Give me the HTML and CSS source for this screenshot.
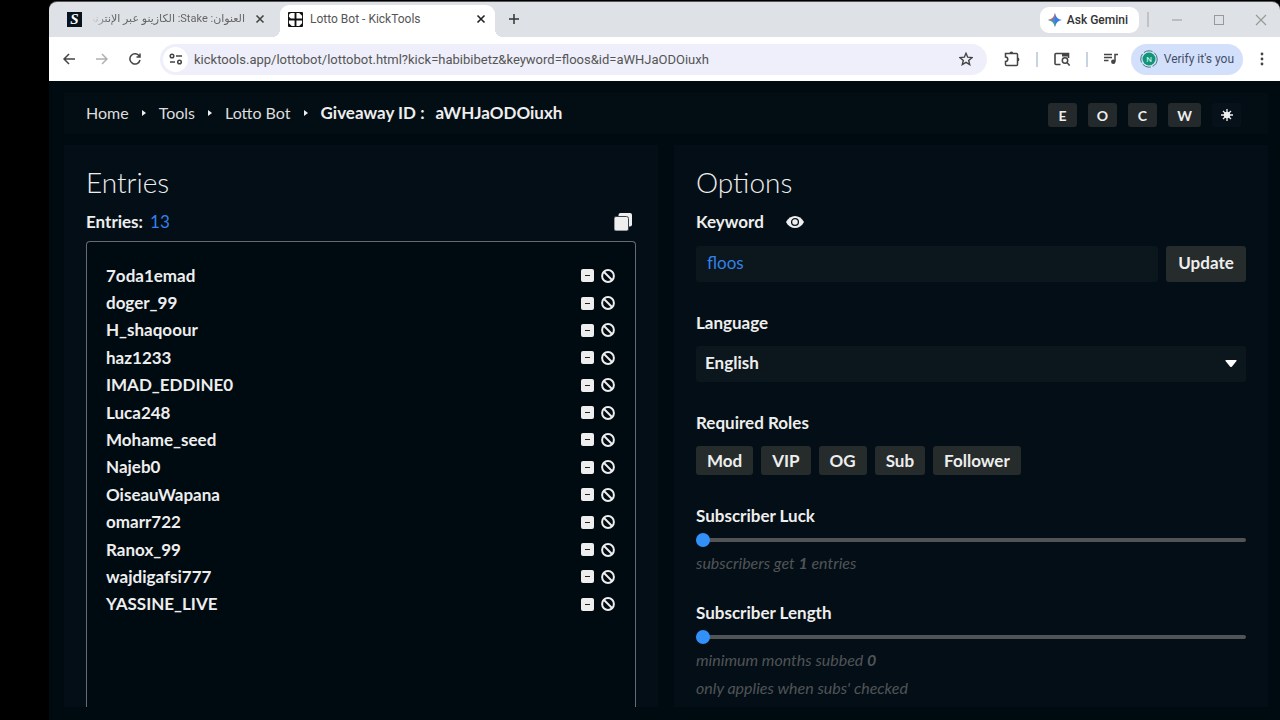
FILE: index.html
```html
<!DOCTYPE html>
<html lang="en">
<head>
    <meta charset="UTF-8">
    <meta name="viewport" content="width=device-width, initial-scale=1.0">
    <title>Lotto Bot - KickTools</title>
    <link rel="stylesheet" href="styles.css">
</head>
<body>
    <div class="window">
        <div class="tabs">
            <div class="tab">
                <span class="favicon stake">S</span>
                <span class="tab-title tab-title-rtl" dir="rtl" lang="ar">العنوان: Stake: الكازينو عبر الإنترنت</span>
                <button class="icon-btn" aria-label="Close tab"><svg width="10" height="10" viewBox="0 0 10 10"><path d="M1.500 1.500l7 7M8.500 1.500l-7 7" stroke="#444" stroke-width="1.600"/></svg></button>
            </div>
            <div class="tab active">
                <svg class="favicon" viewBox="0 0 16 16"><rect width="16" height="16" rx="1" fill="#111"/><g fill="#fff"><path d="M1 4a3 3 0 0 1 3-3h3v6H3L1 5zM9 1h3l3 3v3H9zM1 9h6v6H4l-3-3zM9 9h6v3l-3 3H9z"/></g></svg>
                <span class="tab-title">Lotto Bot - KickTools</span>
                <button class="icon-btn" aria-label="Close tab"><svg width="10" height="10" viewBox="0 0 10 10"><path d="M1.500 1.500l7 7M8.500 1.500l-7 7" stroke="#222" stroke-width="1.600"/></svg></button>
            </div>
            <button class="icon-btn new-tab" aria-label="New tab"><svg width="12" height="12" viewBox="0 0 12 12"><path d="M6 1v10M1 6h10" stroke="#333" stroke-width="1.500"/></svg></button>
            <div class="window-controls">
                <button class="gemini"><svg width="14" height="14" viewBox="0 0 14 14"><path d="M7 0Q8 6 14 7 8 8 7 14 6 8 0 7 6 6 7 0z" fill="#367de8"/><path d="M7 0Q6 6 0 7l7 0z" fill="#e55b4f"/><path d="M0 7q6 1 7 7V7z" fill="#4eac62"/><path d="M4 6l3-2v6L4 8z" fill="#5285cf"/></svg>Ask Gemini</button>
                <span class="divider"></span>
                <button class="icon-btn" aria-label="Minimize"><svg width="12" height="12" viewBox="0 0 12 12"><path d="M1 6h10" stroke="#999"/></svg></button>
                <button class="icon-btn" aria-label="Maximize"><svg width="12" height="12" viewBox="0 0 12 12"><rect x="1.500" y="1.500" width="9" height="9" fill="none" stroke="#999"/></svg></button>
                <button class="icon-btn" aria-label="Close"><svg width="12" height="12" viewBox="0 0 12 12"><path d="M1 1l10 10M11 1L1 11" stroke="#999" stroke-width="1.200"/></svg></button>
            </div>
        </div>
        <div class="toolbar">
            <div class="nav-buttons">
                <button class="icon-btn" aria-label="Back"><svg width="12" height="12" viewBox="0 0 12 12"><path d="M12 6H1M6 1L1 6l5 5" fill="none" stroke="#444" stroke-width="1.500"/></svg></button>
                <button class="icon-btn" aria-label="Forward"><svg width="12" height="12" viewBox="0 0 12 12"><path d="M0 6h11M6 1l5 5-5 5" fill="none" stroke="#b0b0b0" stroke-width="1.500"/></svg></button>
                <button class="icon-btn" aria-label="Reload"><svg width="12" height="12" viewBox="0 0 12 12"><path d="M10.300 3.200A5.100 5.100 0 1 0 11 7M11 .5V4H7.500" fill="none" stroke="#444" stroke-width="1.500"/></svg></button>
            </div>
            <div class="address">
                <span class="site-info"><svg width="14" height="12" viewBox="0 0 14 12" fill="none" stroke="#444" stroke-width="1.500"><circle cx="3" cy="3" r="1.800"/><path d="M7 3h6M1 9h5"/><circle cx="10.500" cy="9" r="1.800"/></svg></span>
                <input class="url" type="text" aria-label="Address" value="kicktools.app/lottobot/lottobot.html?kick=habibibetz&amp;keyword=floos&amp;id=aWHJaODOiuxh">
                <button class="icon-btn" aria-label="Bookmark"><svg width="14" height="14" viewBox="0 0 14 14"><path d="M7 1.300l1.700 3.900 4.300.4-3.300 2.800 1 4.200L7 10.400l-3.700 2.200 1-4.200L1 5.600l4.300-.4z" fill="none" stroke="#444" stroke-width="1.400"/></svg></button>
            </div>
            <div class="extensions">
                <button class="icon-btn" aria-label="Extensions"><svg width="16" height="16" viewBox="0 0 16 16"><path d="M1.500 2.500h11q1 0 1 1v10q0 1-1 1h-10q-1 0-1-1V10.500q2.300 0 2.300-2.200T1.500 6z" fill="none" stroke="#444" stroke-width="1.500"/><path d="M5.500 2.500a1.900 1.900 0 0 1 3.800 0zM13.500 6.500a1.900 1.900 0 0 1 0 3.800z" fill="#444"/></svg></button>
                <span class="divider"></span>
                <button class="icon-btn" aria-label="Search tabs"><svg width="16" height="14" viewBox="0 0 16 14"><path d="M6.500 12.500H2q-1 0-1-1v-9q0-1 1-1h12.500V6" fill="none" stroke="#444" stroke-width="1.600"/><path d="M8 1h7v3.500H8z" fill="#444"/><circle cx="11" cy="8.500" r="2.700" fill="none" stroke="#444" stroke-width="1.500"/><path d="M13 10.500l2.700 3" stroke="#444" stroke-width="1.600"/></svg></button>
                <span class="divider"></span>
                <button class="icon-btn" aria-label="Media"><svg width="14" height="12" viewBox="0 0 14 12"><path d="M0 1.500h8M0 4.500h8M0 7.500h4.500M14 1.500h-3v7" fill="none" stroke="#444" stroke-width="1.500"/><circle cx="9.300" cy="8.800" r="2.200" fill="#444"/></svg></button>
                <button class="profile"><svg width="18" height="18" viewBox="0 0 18 18"><circle cx="9" cy="9" r="8.200" fill="none" stroke="#45776f" stroke-dasharray="9 2"/><circle cx="9" cy="9" r="6.500" fill="#119579"/><text x="9" y="12" text-anchor="middle" font-size="8" fill="#d7fff2">N</text></svg>Verify it's you</button>
                <button class="icon-btn" aria-label="Menu"><svg width="4" height="14" viewBox="0 0 4 14" fill="#444"><circle cx="2" cy="2" r="1.400"/><circle cx="2" cy="7" r="1.400"/><circle cx="2" cy="12" r="1.400"/></svg></button>
            </div>
        </div>

        <div class="page">
            <header class="header">
                <nav class="breadcrumb">
                    <a href="#">Home</a>
                    <span class="arrow"></span>
                    <a href="#">Tools</a>
                    <span class="arrow"></span>
                    <a href="#">Lotto Bot</a>
                    <span class="arrow"></span>
                    <strong>Giveaway ID :</strong>
                    <strong class="giveaway-id">aWHJaODOiuxh</strong>
                </nav>
                <div class="shortcuts">
                    <button class="key">E</button>
                    <button class="key">O</button>
                    <button class="key">C</button>
                    <button class="key key-wide">W</button>
                    <button class="key key-theme" aria-label="Theme"><svg width="12" height="12" viewBox="0 0 12 12"><circle cx="6" cy="6" r="3.200" fill="#eee"/><path d="M6 0v12M0 6h12M2 2l8 8M10 2l-8 8" stroke="#eee" stroke-width="1.300"/></svg></button>
                </div>
            </header>
            <main class="columns">
                <section class="panel">
                    <h1>Entries</h1>
                    <div class="label-row entries-head">
                        <h2>Entries: <span class="count">13</span></h2>
                        <button class="icon-btn" aria-label="Copy entries"><svg width="18" height="18" viewBox="0 0 18 18"><rect x="4.500" y="0" width="13.500" height="13.500" rx="2" fill="#eee"/><rect x="0" y="3.500" width="14.500" height="14.500" rx="2" fill="#eee" stroke="#39424a"/></svg></button>
                    </div>
                    <div class="entries-box">
                        <ul class="entries" id="entries"></ul>
                    </div>
                </section>
                <section class="panel">
                    <h1>Options</h1>
                    <div class="label-row">
                        <label for="keyword">Keyword</label>
                        <button class="icon-btn eye" aria-label="Show keyword"><svg width="18" height="12" viewBox="0 0 18 12"><path d="M0 6C4-2 14-2 18 6 14 14 4 14 0 6z" fill="#eee"/><circle cx="9" cy="6" r="3.400" fill="none" stroke="#07111a" stroke-width="1.300"/></svg></button>
                    </div>
                    <div class="keyword-row">
                        <input class="field keyword" id="keyword" type="text" value="floos">
                        <button class="btn update">Update</button>
                    </div>
                    <label class="label-row" for="language">Language</label>
                    <div class="select-wrap">
                        <select class="field language" id="language"><option>English</option></select>
                        <svg class="caret" width="12" height="7" viewBox="0 0 12 7"><path d="M1 0h10q1 0 .5 1L7 6.500q-1 1-2 0L.5 1Q0 0 1 0z" fill="#fff"/></svg>
                    </div>
                    <h2 class="label-row">Required Roles</h2>
                    <div class="roles">
                        <button class="btn">Mod</button>
                        <button class="btn">VIP</button>
                        <button class="btn">OG</button>
                        <button class="btn">Sub</button>
                        <button class="btn">Follower</button>
                    </div>
                    <div class="slider-group">
                        <label for="luck">Subscriber Luck</label>
                        <input class="slider" id="luck" type="range" min="1" max="10" value="1">
                        <p class="hint">subscribers get <b>1</b> entries</p>
                    </div>
                    <div class="slider-group">
                        <label for="length">Subscriber Length</label>
                        <input class="slider" id="length" type="range" min="0" max="24" value="0">
                        <p class="hint">minimum months subbed <b>0</b></p>
                        <p class="hint">only applies when subs' checked</p>
                    </div>
                </section>
            </main>
        </div>
    </div>
    <script src="script.js"></script>
</body>
</html>
```
FILE: styles.css
```css
* {
    box-sizing: border-box;
}
body {
    margin: 0;
    padding: 2px 0 0 49px;
    height: 100vh;
    background-color: #000;
    font-family: Lato, sans-serif;
    overflow: hidden;
}
button, input, select {
    font-family: inherit;
    border: 0;
    margin: 0;
}
button {
    padding: 0;
    cursor: pointer;
}
svg {
    display: block;
    flex-shrink: 0;
}
.window {
    height: 100%;
    display: flex;
    flex-direction: column;
    border-radius: 8px 8px 0 0;
    background-color: #000a11;
}
.icon-btn {
    background: none;
    display: flex;
    align-items: center;
    justify-content: center;
}

/* Browser bar */
.tabs {
    display: flex;
    align-items: flex-end;
    height: 35px;
    flex-shrink: 0;
    border-radius: 8px 8px 0 0;
    background-color: #dee1e5;
    box-shadow: 0 -1px 0 #55565a;
    font-family: Roboto, sans-serif;
}
.tab {
    display: flex;
    align-items: center;
    gap: 7px;
    width: 231px;
    height: 32px;
    padding: 0 15px 4px 18px;
    color: #666;
    font-size: 12px;
}
.tab.active {
    position: relative;
    width: 215px;
    padding: 0 9px 4px 8px;
    background-color: #fff;
    border-radius: 9px 9px 0 0;
    color: #555;
}
/* Curved feet of the active tab */
.tab.active::before,
.tab.active::after {
    content: "";
    position: absolute;
    bottom: 0;
    width: 8px;
    height: 8px;
}
.tab.active::before {
    left: -8px;
    background: radial-gradient(circle at 0 0, transparent 8px, #fff 8px);
}
.tab.active::after {
    right: -8px;
    background: radial-gradient(circle at 100% 0, transparent 8px, #fff 8px);
}
.favicon {
    width: 15px;
    height: 15px;
}
.stake {
    background-color: #07141f;
    color: #fff;
    font-family: "Liberation Serif", serif;
    font-size: 15px;
    font-style: italic;
    font-weight: bold;
    line-height: 15px;
    text-align: center;
}
.tab-title {
    flex: 1;
    min-width: 0;
    overflow: hidden;
    white-space: nowrap;
    line-height: 20px;
}
.tab-title-rtl {
    margin: 0 3px;
    font-family: Roboto, "DejaVu Sans", sans-serif;
    font-size: 11px;
    mask-image: linear-gradient(to right, transparent, #000 16px);
}
.new-tab {
    width: 38px;
    height: 36px;
}
.window-controls {
    display: flex;
    align-items: center;
    gap: 30px;
    height: 35px;
    margin-left: auto;
    padding-right: 13px;
}
.gemini {
    display: flex;
    align-items: center;
    gap: 5px;
    height: 26px;
    padding: 0 11px 0 8px;
    margin-right: -22px;
    border-radius: 9px;
    background-color: #fff;
    color: #333;
    font-size: 12px;
    font-weight: 500;
}
.divider {
    width: 2px;
    height: 15px;
    background-color: #c8d3e2;
}
.window-controls .divider {
    margin-right: -8px;
    background-color: #bfc3c7;
}
.toolbar {
    display: flex;
    align-items: center;
    height: 44px;
    flex-shrink: 0;
    background-color: #fff;
    font-family: Roboto, sans-serif;
}
.nav-buttons {
    display: flex;
    gap: 21px;
    padding: 0 19px 0 14px;
}
.address {
    flex: 1;
    display: flex;
    align-items: center;
    height: 31px;
    padding: 0 14px 0 3px;
    border-radius: 16px;
    background-color: #eeeffa;
}
.site-info {
    display: flex;
    align-items: center;
    justify-content: center;
    width: 25px;
    height: 25px;
    border-radius: 50%;
    background-color: #fff;
}
.url {
    flex: 1;
    min-width: 0;
    padding: 0 0 0 6px;
    background: none;
    color: #555;
    font-size: 13px;
}
.extensions {
    display: flex;
    align-items: center;
    gap: 16px;
    padding: 0 16px 0 17px;
}
.profile {
    display: flex;
    align-items: center;
    gap: 6px;
    height: 31px;
    margin-right: 1px;
    margin-left: -3px;
    padding: 0 9px;
    border-radius: 16px;
    background-color: #d3e0fb;
    color: #454e66;
    font-size: 12px;
}

/* Page */
.page {
    flex: 1;
    min-height: 0;
    display: flex;
    flex-direction: column;
    gap: 11px;
    padding: 12px 12px 13px 15px;
    color: #eee;
}
.header {
    display: flex;
    justify-content: space-between;
    align-items: center;
    height: 41px;
    padding: 0 27px 0 22px;
    background-color: #030d14;
}
.breadcrumb {
    display: flex;
    align-items: center;
    padding-bottom: 2px;
    font-size: 17px;
}
.breadcrumb a {
    color: #ddd;
    font-size: 16px;
    text-decoration: none;
}
.arrow {
    margin: 0 13px;
    border-left: 4px solid #eee;
    border-top: 3px solid transparent;
    border-bottom: 3px solid transparent;
}
.giveaway-id {
    margin-left: 11px;
}
.shortcuts {
    display: flex;
    gap: 11px;
    padding-top: 3px;
}
.key {
    width: 29px;
    height: 24px;
    border-radius: 3px;
    background-color: #24292b;
    color: #eee;
    font-size: 14px;
    font-weight: bold;
}
.key-wide {
    width: 33px;
}
.key-theme {
    display: flex;
    align-items: center;
    justify-content: center;
    background-color: #071119;
}
.columns {
    flex: 1;
    min-height: 0;
    display: grid;
    grid-template-columns: 1fr 1fr;
    gap: 16px;
}
.panel {
    display: flex;
    flex-direction: column;
    min-height: 0;
    overflow: hidden;
    padding: 19px 22px 0;
    background-color: #040e16;
}
h1 {
    margin: 0;
    font-size: 28px;
    font-weight: 300;
    line-height: 36px;
}
h2, label {
    margin: 0;
    font-size: 17px;
    font-weight: bold;
    line-height: 22px;
}
.label-row {
    display: flex;
    align-items: center;
    flex-shrink: 0;
    height: 22px;
    margin-top: 11px;
}
.entries-head {
    justify-content: space-between;
    padding-right: 4px;
}
.count {
    margin-left: 3px;
    color: #3282eb;
    font-weight: normal;
}
.entries-box {
    flex: 1;
    margin-top: 8px;
    padding: 20px 20px 20px 19px;
    border: 1px solid #656b70;
    border-bottom: 0;
    border-radius: 4px 4px 0 0;
    background-color: #000a11;
}
.entries {
    display: grid;
    grid-auto-rows: 1fr;
    height: 356px;
    margin: 0;
    padding: 0;
    list-style: none;
}
.entry {
    display: flex;
    align-items: center;
    gap: 7px;
    font-size: 17px;
    font-weight: bold;
    line-height: 22px;
}
.entry-name {
    flex: 1;
}
.eye {
    margin-left: 22px;
}
.keyword-row {
    display: flex;
    gap: 8px;
    margin: 13px 0 19px;
}
.field {
    height: 36px;
    padding: 0 11px 3px;
    border-radius: 3px;
    background-color: #0c161d;
    color: #eee;
    font-size: 17px;
}
.keyword {
    flex: 1;
    min-width: 0;
    color: #3282eb;
}
.btn {
    height: 29px;
    padding: 0 11px 1px;
    border-radius: 3px;
    background-color: #262b2c;
    color: #eee;
    font-size: 17px;
    font-weight: bold;
}
.update {
    width: 80px;
    height: 36px;
    padding-bottom: 3px;
}
.select-wrap {
    position: relative;
    margin: 12px 0 19px;
}
.language {
    display: block;
    width: 100%;
    padding: 0 9px 3px;
    appearance: none;
    font-weight: bold;
}
.caret {
    position: absolute;
    right: 9px;
    top: 14px;
    pointer-events: none;
}
.roles {
    display: flex;
    gap: 8px;
    margin: 12px 0 5px;
}
.slider-group {
    display: flex;
    flex-direction: column;
    margin-top: 25px;
}
.slider {
    appearance: none;
    width: 100%;
    height: 14px;
    margin: 6px 0 2px;
    background: none;
}
.slider::-webkit-slider-runnable-track {
    height: 4px;
    border-radius: 2px;
    background-color: #505457;
}
.slider::-webkit-slider-thumb {
    appearance: none;
    width: 14px;
    height: 14px;
    margin-top: -5px;
    border-radius: 50%;
    background-color: #3291f8;
}
.hint {
    margin: 0;
    color: #505457;
    font-size: 16px;
    font-style: italic;
    line-height: 28px;
}
```
FILE: script.js
```js
var names = [
    "7oda1emad", "doger_99", "H_shaqoour", "haz1233", "IMAD_EDDINE0",
    "Luca248", "Mohame_seed", "Najeb0", "OiseauWapana", "omarr722",
    "Ranox_99", "wajdigafsi777", "YASSINE_LIVE"
];

var removeIcon = '<svg width="13" height="13" viewBox="0 0 13 13"><rect width="13" height="13" rx="2" fill="#eee"/><path d="M4 6.500h5" stroke="#222"/></svg>';
var banIcon = '<svg width="14" height="14" viewBox="0 0 14 14"><circle cx="7" cy="7" r="5.900" fill="none" stroke="#eee" stroke-width="2"/><path d="M3 3l8 8" stroke="#eee" stroke-width="2"/></svg>';

var list = document.getElementById("entries");
names.forEach(function(name) {
    var item = document.createElement("li");
    item.className = "entry";
    item.innerHTML = '<span class="entry-name">' + name + '</span>' +
        '<button class="icon-btn" aria-label="Remove">' + removeIcon + '</button>' +
        '<button class="icon-btn" aria-label="Ban">' + banIcon + '</button>';
    list.appendChild(item);
});
```
